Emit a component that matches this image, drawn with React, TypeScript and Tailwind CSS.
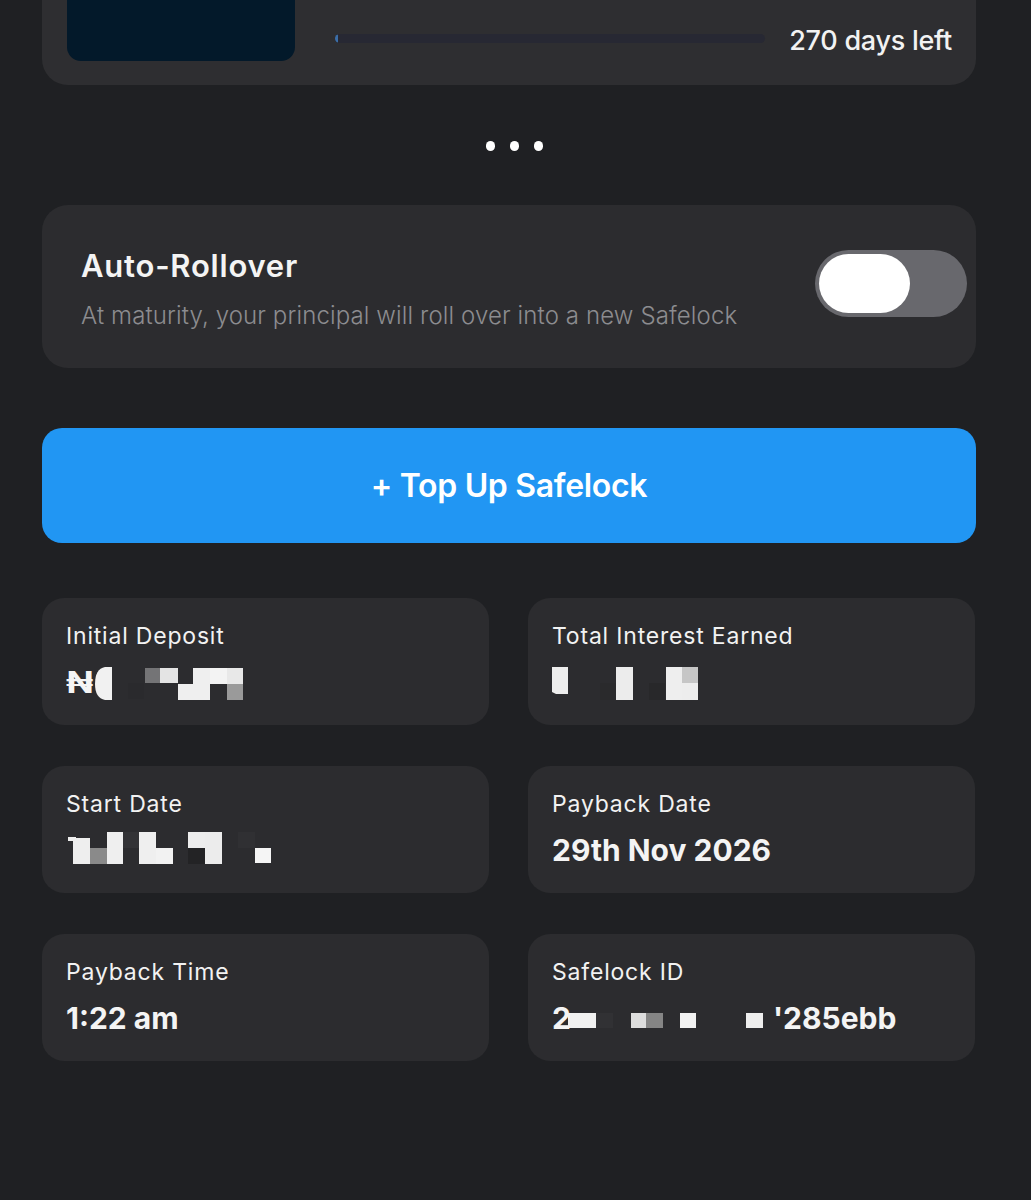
import React from "react";

type Block = [number, number, number, number, string];

// pixelated (censored) value, drawn as blocks
const Pixels = ({ w, blocks, className }: { w: number; blocks: Block[]; className?: string }) => (
  <svg width={w} height={36} className={className}>
    {blocks.map(([x, y, bw, bh, c], i) => (
      <rect key={i} x={x} y={y} width={bw} height={bh} fill={c} />
    ))}
  </svg>
);

const InfoCard = ({ label, children }: { label: string; children: React.ReactNode }) => (
  <div className="h-[127px] rounded-[22px] bg-[#2c2c2f] pl-[24px] pt-[24px]">
    <p className="text-[23px] leading-[28px] tracking-[0.035em] text-[#f2f2f2]">{label}</p>
    <div className="mt-[14px] flex h-[36px] items-start text-[30px] font-bold leading-[36px] text-[#f4f4f4]">
      {children}
    </div>
  </div>
);

export default function App() {
  return (
    <div
      className="min-h-[1200px] w-full bg-[#1f2023] text-white"
      style={{ fontFamily: "Inter, 'Noto Sans', sans-serif" }}
    >
      <div className="ml-[42px] w-[934px]">
        {/* safelock card, top cut off */}
        <div className="flex h-[85px] items-start rounded-b-[26px] bg-[#2e2e31] pl-[25px] pr-[24px]">
          <div className="h-[61px] w-[228px] rounded-b-[14px] bg-[#03192a]" />
          <div className="ml-[40px] mt-[34px] h-[9px] w-[430px] overflow-hidden rounded-full bg-[#272833]">
            <div className="h-full w-[3px] rounded-full bg-[#3b6ea8]" />
          </div>
          <span className="ml-auto mt-[24px] text-[27px] font-medium leading-[34px] tracking-[-0.01em] text-[#f2f2f2]">
            270 days left
          </span>
        </div>

        <div className="mt-[56px] flex justify-center gap-[15px] pl-[10px]">
          <span className="h-[10px] w-[9px] rounded-full bg-white" />
          <span className="h-[10px] w-[9px] rounded-full bg-white" />
          <span className="h-[10px] w-[9px] rounded-full bg-white" />
        </div>

        {/* auto rollover */}
        <div className="mt-[54px] flex h-[163px] items-center rounded-[26px] bg-[#2c2c2f] pl-[39px] pr-[9px]">
          <div className="pt-[6px]">
            <h2 className="text-[31px] font-semibold leading-[36px] tracking-[0.025em] text-[#f4f4f4]">
              Auto-Rollover
            </h2>
            <p className="mt-[17px] text-[24px] font-light leading-[30px] tracking-[0.005em] text-[#8c8c90]">
              At maturity, your principal will roll over into a new Safelock
            </p>
          </div>
          <div className="mb-[6px] ml-auto flex h-[67px] w-[152px] items-center rounded-full bg-[#68686d] pl-[4px]">
            <div className="h-[59px] w-[91px] rounded-full bg-white" />
          </div>
        </div>

        <button className="mt-[60px] flex h-[115px] w-full items-center justify-center rounded-[20px] bg-[#2196f3] text-[32px] font-semibold tracking-[-0.01em] text-white">
          + Top Up Safelock
        </button>

        <div className="mt-[55px] grid grid-cols-[447px_447px] grid-rows-[128px_128px_128px] gap-x-[39px] gap-y-[40px]">
          <InfoCard label="Initial Deposit">
            <span className="scale-x-[1.2] origin-left mr-[4px]">₦</span>
            <svg width={150} height={36}>
              <path d="M12 3 H19 V36 H12 Q2 34 2 20 Q2 5 12 3 Z" fill="#f1f1f1" />
              <rect x={35} y={19} width={16} height={16} fill="#2a2a2d" />
              <rect x={52} y={4} width={15} height={15} fill="#747476" />
              <rect x={67} y={4} width={18} height={15} fill="#e4e4e4" />
              <rect x={85} y={20} width={32} height={16} fill="#efefef" />
              <rect x={100} y={4} width={17} height={16} fill="#efefef" />
              <rect x={117} y={4} width={17} height={16} fill="#f3f3f3" />
              <rect x={134} y={4} width={16} height={16} fill="#e8e8e8" />
              <rect x={134} y={20} width={16} height={16} fill="#9a9a9a" />
            </svg>
          </InfoCard>
          <InfoCard label="Total Interest Earned">
            <svg width={150} height={36}>
              <polygon points="0,3 16,3 16,30 4,30 0,28" fill="#eeeeee" />
              <rect x={48} y={19} width={16} height={17} fill="#2a2a2c" />
              <rect x={64} y={3} width={17} height={33} fill="#ececec" />
              <rect x={97} y={19} width={16} height={17} fill="#28282a" />
              <rect x={114} y={3} width={16} height={33} fill="#eeeeee" />
              <rect x={130} y={3} width={16} height={16} fill="#c6c6c6" />
              <rect x={130} y={19} width={16} height={17} fill="#ededed" />
            </svg>
          </InfoCard>
          <InfoCard label="Start Date">
            <Pixels
              w={210}
              blocks={[
                [2, 5, 8, 4, "#eeeeee"],
                [7, 6, 17, 26, "#eeeeee"],
                [24, 16, 17, 16, "#8a8a8a"],
                [41, 0, 16, 32, "#efefef"],
                [57, 0, 16, 16, "#333336"],
                [73, 0, 17, 32, "#efefef"],
                [90, 16, 17, 16, "#f2f2f2"],
                [122, 0, 17, 16, "#ededed"],
                [122, 16, 17, 16, "#232325"],
                [139, 0, 17, 32, "#ececec"],
                [172, 0, 17, 16, "#303033"],
                [189, 16, 16, 15, "#f5f5f5"],
              ]}
            />
          </InfoCard>
          <InfoCard label="Payback Date">29th Nov 2026</InfoCard>
          <InfoCard label="Payback Time">1:22 am</InfoCard>
          <InfoCard label="Safelock ID">
            <span>2</span>
            <Pixels
              w={205}
              className="-ml-[3px]"
              blocks={[
                [0, 13, 28, 15, "#f1f1f1"],
                [28, 13, 17, 15, "#313134"],
                [63, 13, 15, 15, "#dddddd"],
                [78, 13, 17, 15, "#858585"],
                [112, 13, 16, 15, "#f2f2f2"],
                [178, 13, 17, 15, "#eeeeee"],
              ]}
            />
            <span>'285ebb</span>
          </InfoCard>
        </div>
      </div>
    </div>
  );
}
